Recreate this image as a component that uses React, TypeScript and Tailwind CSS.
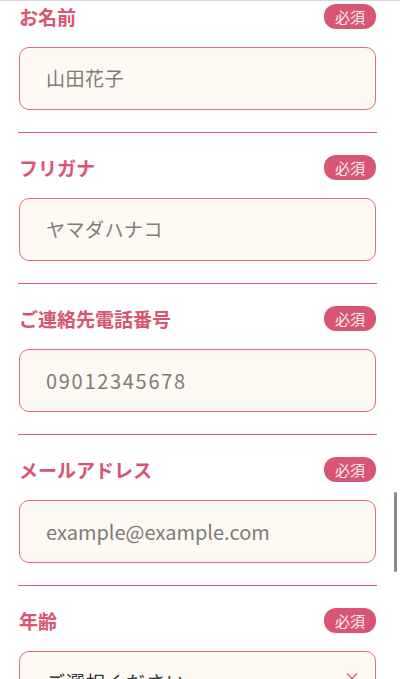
import React from "react";

const font = { fontFamily: '"Noto Sans CJK JP", "Noto Sans", sans-serif' };

function Badge() {
  return (
    <span className="flex h-[25px] w-[52px] items-center justify-center rounded-[12px] bg-[#d85674] text-[15px] leading-none text-[#fdeef2]">
      必須
    </span>
  );
}

function Field({
  label,
  placeholder,
  select,
  track,
}: {
  label: string;
  placeholder: string;
  select?: boolean;
  track: string;
}) {
  return (
    <div className="flex flex-col">
      <div className="flex h-[25px] items-center justify-between">
        <span className="text-[19px] font-bold leading-none text-[#d9546f]">{label}</span>
        <Badge />
      </div>
      <div className="mt-[18px] flex h-[63px] items-center justify-between rounded-[10px] border border-[#e06b85] bg-[#fdf9f3] pl-[26px] pr-[17px]">
        <span className={(select ? "text-[#333] " : "text-[#7f7b76] ") + track}>{placeholder}</span>
        {select && (
          <svg className="mb-[14px]" width="12" height="10" viewBox="0 0 12 10" fill="none" stroke="#e06b85" strokeWidth="1.6">
            <path d="M1 2.5l5 5 5-5" />
          </svg>
        )}
      </div>
    </div>
  );
}

export default function App() {
  const fields = [
    { label: "お名前", placeholder: "山田花子", track: "text-[19px] tracking-[0.5px]" },
    { label: "フリガナ", placeholder: "ヤマダハナコ", track: "text-[19px] tracking-[0.5px]" },
    { label: "ご連絡先電話番号", placeholder: "09012345678", track: "text-[20px] tracking-[1.7px]" },
    { label: "メールアドレス", placeholder: "example@example.com", track: "text-[20px] tracking-[0px]" },
    { label: "年齢", placeholder: "ご選択ください", select: true, track: "text-[19px] tracking-[1px]" },
  ];
  return (
    <div style={font} className="relative h-[679px] w-[400px] overflow-hidden bg-white">
      <div className="h-px bg-[#d9d9d9]" />
      <div className="flex flex-col pl-[19px] pr-[24px] pt-[3px]">
        {fields.map((f, i) => (
          <div key={i} className="flex flex-col">
            <Field label={f.label} placeholder={f.placeholder} select={f.select} track={f.track} />
            {i < fields.length - 1 && <div className="-mx-px mb-[22px] mt-[22px] h-px bg-[#e2577a]" />}
          </div>
        ))}
      </div>
      <div className="absolute left-[394px] top-[492px] h-[80px] w-[3px] rounded-full bg-[#8a8a8a]" />
    </div>
  );
}
